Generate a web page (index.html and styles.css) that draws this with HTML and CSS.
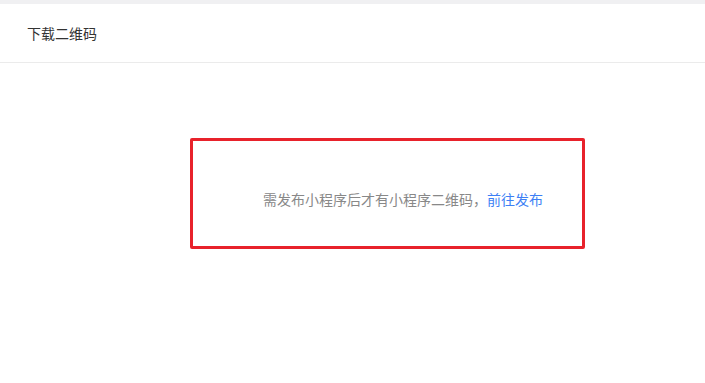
FILE: index.html
```html
<!DOCTYPE html>
<html lang="zh">
<head>
<meta charset="utf-8">
<link rel="stylesheet" href="styles.css">
</head>
<body>
<div class="topbar"></div>
<header class="header">下载二维码</header>
<main class="content">
  <div class="notice">
    <p class="msg">需发布小程序后才有小程序二维码，<a class="link" href="#">前往发布</a></p>
  </div>
</main>
</body>
</html>
```
FILE: styles.css
```css
html, body {
  margin: 0;
  padding: 0;
  background: #fff;
  font-family: "Microsoft YaHei", "Noto Sans CJK SC", sans-serif;
}
.topbar {
  height: 4px;
  background: #f0f0f2;
}
.header {
  height: 58px;
  line-height: 58px;
  padding-left: 27px;
  font-size: 14px;
  color: #333;
  border-bottom: 1px solid #ebebeb;
}
.content {
  padding-top: 75px;
  padding-left: 190px;
}
.notice {
  width: 389px;
  height: 105px;
  border: 3px solid #e8222b;
  border-radius: 2px;
  display: flex;
  align-items: center;
  box-sizing: content-box;
}
.msg {
  margin: 10px 0 0 70px;
  font-size: 14px;
  color: #888;
  white-space: nowrap;
}
.link {
  color: #3d7ff5;
  text-decoration: none;
}
```
